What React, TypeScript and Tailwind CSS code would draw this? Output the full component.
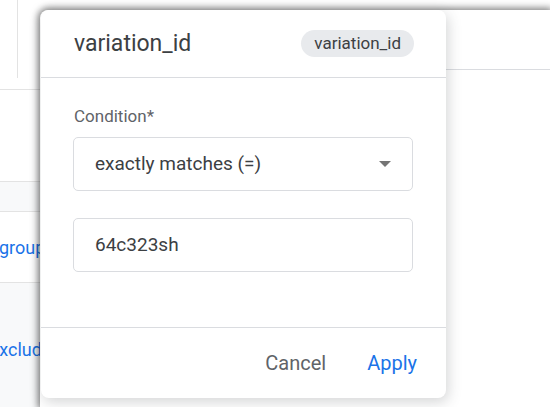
import React from "react";

export default function App() {
  const font = { fontFamily: "Roboto, 'Noto Sans', Arial, sans-serif" };
  return (
    <div className="w-[550px] h-[407px] overflow-hidden bg-white flex" style={font}>
      {/* left background strip */}
      <div className="w-[40px] shrink-0 flex flex-col overflow-hidden">
        <div className="h-[90px] shrink-0 border-b border-[#e3e3e3] flex">
          <div className="w-[18px] h-[78px] border-r border-[#e3e3e3]" />
        </div>
        <div className="h-[91px] shrink-0" />
        <div className="h-[31px] shrink-0 bg-[#f8f9fa] border-t border-b border-[#e3e3e3]" />
        <div className="h-[70px] shrink-0 flex items-center">
          <span className="whitespace-nowrap text-[18px] text-[#1a73e8] -ml-[1px]">group</span>
        </div>
        <div className="flex-1 bg-[#f8f9fa] border-t border-[#e3e3e3] flex flex-col">
          <div className="h-[51px] shrink-0" />
          <div className="h-[30px] flex items-center">
            <span className="whitespace-nowrap text-[18px] text-[#1a73e8] -ml-[11px]">Exclude</span>
          </div>
        </div>
      </div>

      {/* panel behind dialog */}
      <div className="flex-1 mt-[10px] bg-white rounded-tl-lg shadow-[0_0_7px_2px_rgba(0,0,0,0.5)] flex">
        {/* dialog */}
        <div className="relative z-10 ml-[1px] w-[405px] h-[388px] shrink-0 bg-white rounded-lg shadow-[2px_4px_14px_rgba(60,64,67,0.22)] flex flex-col">
          <div className="h-[68px] shrink-0 flex items-center justify-between pl-[33px] pr-[32px] border-b border-[#dadce0]">
            <span className="text-[23px] text-[#3c4043] leading-none">variation_id</span>
            <span className="h-[27px] px-[13px] rounded-full bg-[#e8eaed] text-[17px] text-[#3c4043] flex items-center">
              variation_id
            </span>
          </div>
          <div className="flex-1 pl-[32px] pr-[33px] pt-[28px]">
            <div className="text-[17px] leading-[20px] text-[#5f6368] pl-[1px]">Condition*</div>
            <div className="mt-[11px] h-[54px] rounded-[5px] border border-[#dadce0] flex items-center justify-between pl-[21px] pr-[21px]">
              <span className="text-[19px] text-[#3c4043]">exactly matches (=)</span>
              <svg width="12" height="6" viewBox="0 0 12 6">
                <polygon points="0,0 12,0 6,6" fill="#757575" />
              </svg>
            </div>
            <div className="mt-[27px] h-[54px] rounded-[5px] border border-[#dadce0] flex items-center pl-[21px]">
              <span className="text-[19px] text-[#3c4043]">64c323sh</span>
            </div>
          </div>
          <div className="h-[71px] shrink-0 border-t border-[#dadce0] flex items-center justify-end pr-[29px] gap-[41px]">
            <span className="text-[20px] text-[#5f6368]">Cancel</span>
            <span className="text-[20px] text-[#1a73e8]">Apply</span>
          </div>
        </div>
        {/* rest of panel */}
        <div className="flex-1">
          <div className="h-[60px] border-b border-[#dadce0]" />
        </div>
      </div>
    </div>
  );
}
